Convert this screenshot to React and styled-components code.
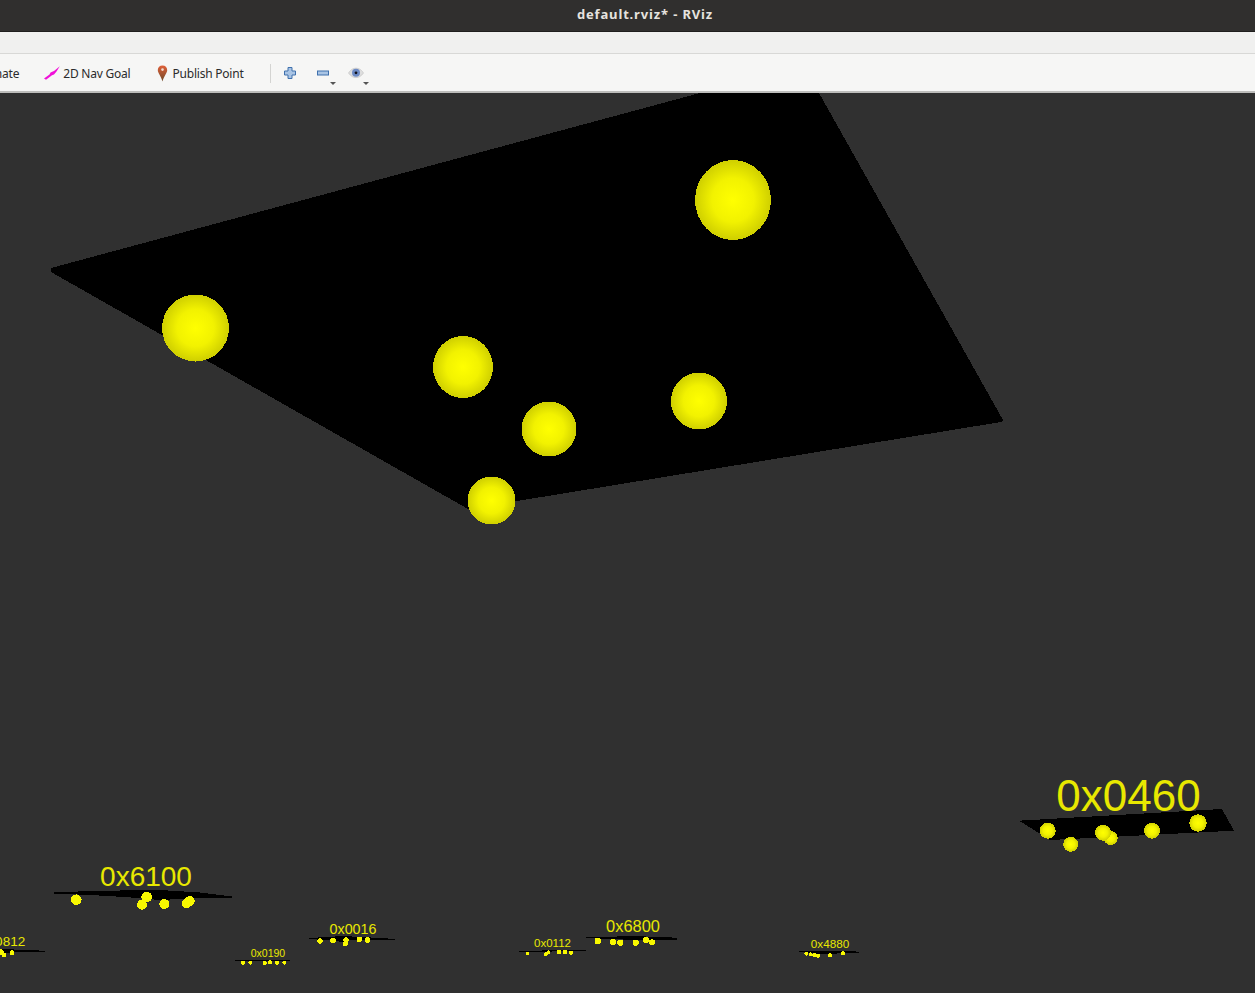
import React from 'react'
import styled, { createGlobalStyle } from 'styled-components'

const GlobalStyle = createGlobalStyle`
  html, body {
    margin: 0;
    padding: 0;
    background: #303030;
  }
`

const Window = styled.div`
  width: 1255px;
  height: 993px;
  display: flex;
  flex-direction: column;
  overflow: hidden;
  font-family: "Noto Sans", "Open Sans", sans-serif;
`

const TitleBar = styled.div`
  height: 31px;
  flex: none;
  padding-left: 35px;
  border-bottom: 1px solid #1f1e1d;
  background: #302f2e;
  color: #e6e3df;
  font-size: 13px;
  font-weight: 700;
  line-height: 28px;
  text-align: center;
  letter-spacing: 0.85px;
`

const MenuBar = styled.div`
  height: 21px;
  flex: none;
  border-bottom: 1px solid #d8d8d6;
  background: #f0f0ef;
`

const ToolBar = styled.div`
  height: 36px;
  flex: none;
  padding-top: 1px;
  display: flex;
  align-items: center;
  border-bottom: 2px solid #bdbdbb;
  background: #f6f6f5;
  color: #2b2b2b;
  font-size: 12px;
  letter-spacing: -0.22px;
`

const Tool = styled.div`
  flex: none;
  display: flex;
  align-items: center;
  gap: ${props => props.$gap || 3}px;
  margin-left: ${props => props.$left}px;
  white-space: nowrap;
`

const Separator = styled.div`
  flex: none;
  width: 1px;
  height: 19px;
  margin-left: ${props => props.$left}px;
  background: #d4d4d2;
`

const IconButton = styled.div`
  position: relative;
  flex: none;
  width: 16px;
  height: 16px;
  margin-left: ${props => props.$left}px;
`

const Caret = styled.span`
  position: absolute;
  right: -5px;
  bottom: -4px;
  width: 0;
  height: 0;
  border-left: 3px solid transparent;
  border-right: 3px solid transparent;
  border-top: 3px solid #555;
`

const Viewport = styled.svg`
  flex: 1;
  display: block;
  background: #303030;
`

const Label = styled.text`
  font-family: "Liberation Sans", Arial, sans-serif;
  fill: #e8e800;
`

const GoalIcon = () => (
  <svg width="16" height="14" viewBox="0 0 16 14">
    <path d="M0 12.5 L5.5 8.5 L6.5 6.5 L10 5 L15.8 0.2 L12.5 5.5 L10 8.5 L8 9.2 L2 13.8 Z" fill="#f010d8" />
  </svg>
)

const PinIcon = () => (
  <svg width="11" height="17" viewBox="0 0 11 17">
    <defs>
      <linearGradient id="pin" x1="0" y1="0" x2="0" y2="1">
        <stop offset="0" stopColor="#e0603a" />
        <stop offset="1" stopColor="#6e4a28" />
      </linearGradient>
    </defs>
    <path d="M5.5 0.5 C8.3 0.5 10.2 2.5 10.2 5 C10.2 8 7 11 5.5 16.5 C4 11 0.8 8 0.8 5 C0.8 2.5 2.7 0.5 5.5 0.5 Z" fill="url(#pin)" />
    <circle cx="5.5" cy="4.6" r="1.3" fill="#f3dcd0" />
  </svg>
)

const PlusIcon = () => (
  <svg width="16" height="16" viewBox="0 0 16 16">
    <path d="M6 2.5 H10 V6 H13.5 V10 H10 V13.5 H6 V10 H2.5 V6 H6 Z" fill="#a9c4e4" stroke="#3f70ad" strokeWidth="1" />
  </svg>
)

const MinusIcon = () => (
  <svg width="16" height="16" viewBox="0 0 16 16">
    <rect x="2.5" y="6" width="11" height="4" fill="#a9c4e4" stroke="#3f70ad" strokeWidth="1" />
  </svg>
)

const EyeIcon = () => (
  <svg width="16" height="16" viewBox="0 0 16 16">
    <path d="M0.5 8 C3 4.2 5.5 3.2 8 3.2 C10.5 3.2 13 4.2 15.5 8 C13 11.5 10.5 12.6 8 12.6 C5.5 12.6 3 11.5 0.5 8 Z" fill="#dedede" stroke="#bcbcbc" strokeWidth="0.6" />
    <circle cx="8" cy="7.8" r="4" fill="#6c8ac4" />
    <circle cx="8" cy="7.8" r="1.4" fill="#101018" />
  </svg>
)

// big spheres of the foreground marker, in window coordinates
const bigSpheres = [
  [733, 200, 38, 40],
  [195.5, 328, 33.5, 33.5],
  [463, 367, 30, 31],
  [549, 429, 27.5, 27.5],
  [699, 401, 28, 28.5],
  [491.5, 500.5, 24, 24]
]

const clusters = [
  {
    label: '0x0460', x: 1128.5, y: 811, size: 44,
    plane: '1019,820.7 1222,809 1234,830.7 1050,840',
    spheres: [[1047.7, 830.7, 8], [1070.7, 844.3, 7.5], [1110.7, 838, 7], [1103, 832.7, 8], [1152, 830.7, 8], [1198, 823, 8.7]]
  },
  {
    label: '0x6100', x: 146, y: 886, size: 28,
    plane: '54,892.5 90,891 120,890.5 160,890 200,892.5 232,896.5 232,897.5 200,898 160,900 125,897 90,895 54,893.5',
    spheres: [[76.3, 899.7, 5.3], [146.7, 897, 5.3], [142, 904.7, 5], [164.3, 904, 5], [186.7, 903.3, 4.8], [189.7, 901, 5]]
  },
  {
    label: '0x0016', x: 353, y: 934, size: 14.3,
    plane: '309,938 343,936 380,938 395,939 395,940 350,940 343,942 325,940 309,939',
    spheres: [[320, 941, 2.8], [333, 940.3, 2.8], [346, 940, 2.8], [345.3, 943.7, 2.5], [359.3, 939.3, 2.8], [367.7, 940, 2.8]]
  },
  {
    label: '0x0190', x: 268, y: 957, size: 10.5,
    plane: '235,960 290,960 290,961 235,961',
    spheres: [[243, 962.7, 2], [250.3, 962.7, 2], [264.7, 963, 2], [270, 962.3, 2], [277, 962.7, 2], [284.3, 962.7, 2]]
  },
  {
    label: '0x0812', x: 3, y: 946, size: 13.5,
    plane: '-5,949 33,950 45,951 45,952 20,952 5,953',
    spheres: [[1, 952, 2.8], [4, 955, 2.3], [12, 952.7, 2.5]]
  },
  {
    label: '0x0112', x: 552.5, y: 947, size: 11.5,
    plane: '519,951 535,951 555,949.5 586,950 586,951 560,951 535,952.5 519,952',
    spheres: [[527.7, 953.7, 1.8], [546, 954, 2], [548.3, 952.3, 2], [559, 952, 2.2], [565, 952, 2.2], [571, 952.7, 2]]
  },
  {
    label: '0x6800', x: 633, y: 932.3, size: 16.4,
    plane: '586,937 608,937 625,936 667,937 677,938 677,940 640,940 606,939 586,938',
    spheres: [[597.7, 941, 3.2], [613, 942, 3], [620.3, 942.7, 3], [635.7, 942.7, 3], [646, 940, 3.2], [652, 942.3, 3]]
  },
  {
    label: '0x4880', x: 830, y: 948, size: 11.7,
    plane: '799,951 853,951 859,952 859,953 815,954 805,952 799,952',
    spheres: [[806.3, 953.7, 2], [810.7, 954.3, 2], [814.3, 955, 2], [818, 955.7, 2], [830, 955.3, 2], [843, 953.3, 2.2]]
  }
]

const Scene = () => (
  <Viewport width="1255" height="900" viewBox="0 93 1255 900">
    <defs>
      <radialGradient id="sphere">
        <stop offset="0" stopColor="#ffff00" />
        <stop offset="0.55" stopColor="#f2f200" />
        <stop offset="1" stopColor="#cfcf00" />
      </radialGradient>
    </defs>
    <polygon points="51,268 700,93 819,93 1003,420 1001,422 468,509 51,272" fill="#000" shapeRendering="crispEdges" />
    {bigSpheres.map(([cx, cy, rx, ry]) => (
      <ellipse key={cx} cx={cx} cy={cy} rx={rx} ry={ry} fill="url(#sphere)" shapeRendering="crispEdges" />
    ))}
    {clusters.map(c => (
      <g key={c.label}>
        <polygon points={c.plane} fill="#000" shapeRendering="crispEdges" />
        {c.spheres.map(([cx, cy, r]) => (
          <circle key={`${cx}-${cy}`} cx={cx} cy={cy} r={r} fill={r > 6 ? 'url(#sphere)' : '#f8f800'} shapeRendering="crispEdges" />
        ))}
        <Label x={c.x} y={c.y} fontSize={c.size} textAnchor="middle">{c.label}</Label>
      </g>
    ))}
  </Viewport>
)

const App = () => (
  <>
    <GlobalStyle />
    <Window>
      <TitleBar>default.rviz* - RViz</TitleBar>
      <MenuBar />
      <ToolBar>
        <Tool $left={-75}>2D Pose Estimate</Tool>
        <Tool $left={25}><GoalIcon />2D Nav Goal</Tool>
        <Tool $left={26} $gap={5}><PinIcon />Publish Point</Tool>
        <Separator $left={26} />
        <IconButton $left={11}><PlusIcon /></IconButton>
        <IconButton $left={17}><MinusIcon /><Caret /></IconButton>
        <IconButton $left={17}><EyeIcon /><Caret /></IconButton>
      </ToolBar>
      <Scene />
    </Window>
  </>
)

export default App
